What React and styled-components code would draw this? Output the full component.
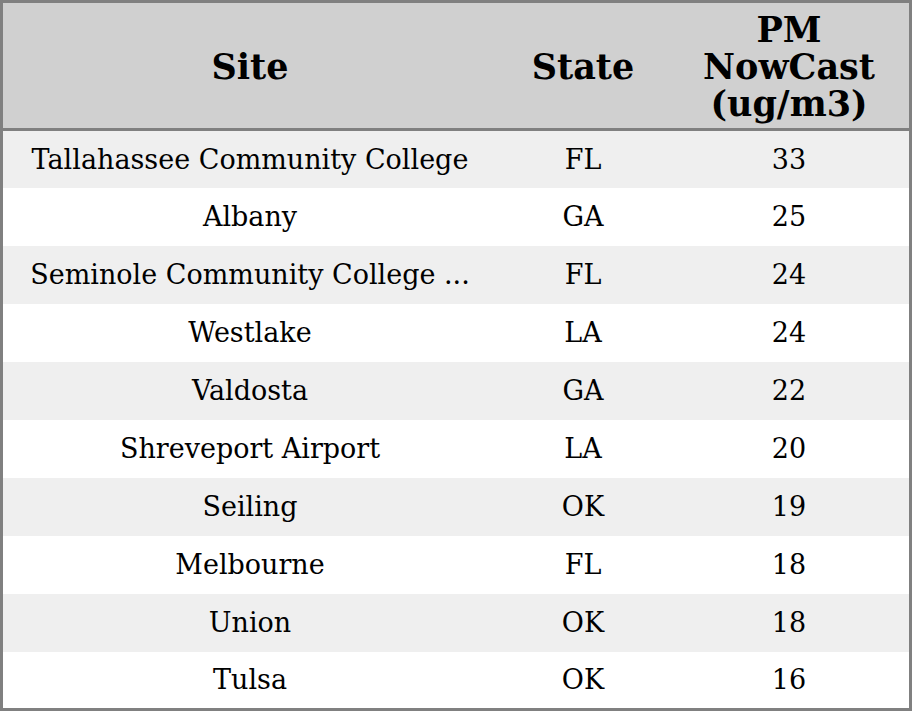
import React from "react";
import styled, { createGlobalStyle } from "styled-components";

const rows = [
  { site: "Tallahassee Community College", state: "FL", pm: 33 },
  { site: "Albany", state: "GA", pm: 25 },
  { site: "Seminole Community College ...", state: "FL", pm: 24 },
  { site: "Westlake", state: "LA", pm: 24 },
  { site: "Valdosta", state: "GA", pm: 22 },
  { site: "Shreveport Airport", state: "LA", pm: 20 },
  { site: "Seiling", state: "OK", pm: 19 },
  { site: "Melbourne", state: "FL", pm: 18 },
  { site: "Union", state: "OK", pm: 18 },
  { site: "Tulsa", state: "OK", pm: 16 },
];

const GlobalStyle = createGlobalStyle`
  html, body {
    margin: 0;
    padding: 0;
    background: #ffffff;
  }
  body {
    font-family: "DejaVu Serif", serif;
  }
`;

const Table = styled.table`
  width: 912px;
  height: 711px;
  border-collapse: collapse;
  border: 3px solid #808080;
  table-layout: fixed;
  font-family: "DejaVu Serif", serif;
  color: #000;
`;

const HeadRow = styled.tr`
  background: #d0d0d0;
  border-bottom: 3px solid #808080;
  height: 125px;
`;

const HeadCell = styled.th`
  width: ${({ w }) => w}px;
  font-size: 35px;
  font-weight: bold;
  line-height: 37px;
  text-align: center;
  padding: 8px 0 6px;
`;

const Row = styled.tr`
  background: ${({ striped }) => (striped ? "#efefef" : "#ffffff")};
  height: 58px;
`;

const Cell = styled.td`
  font-size: 27px;
  text-align: center;
  padding: 0;
  white-space: nowrap;
`;

function App() {
  return (
    <>
      <GlobalStyle />
      <Table>
        <thead>
          <HeadRow>
            <HeadCell w={494}>Site</HeadCell>
            <HeadCell w={172}>State</HeadCell>
            <HeadCell w={240}>
              PM
              <br />
              NowCast
              <br />
              (ug/m3)
            </HeadCell>
          </HeadRow>
        </thead>
        <tbody>
          {rows.map((r, i) => (
            <Row key={i} striped={i % 2 === 0}>
              <Cell>{r.site}</Cell>
              <Cell>{r.state}</Cell>
              <Cell>{r.pm}</Cell>
            </Row>
          ))}
        </tbody>
      </Table>
    </>
  );
}

export default App;
